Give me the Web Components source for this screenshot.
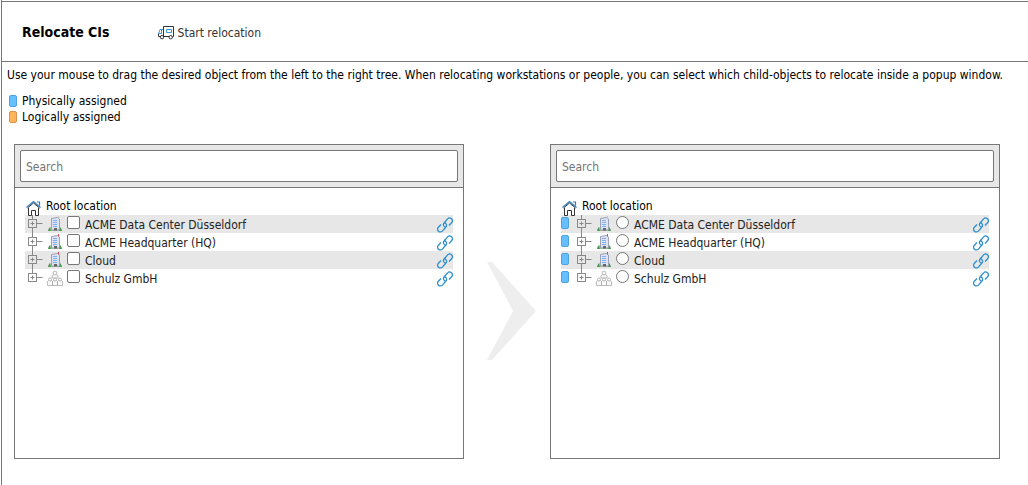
<!DOCTYPE html>
<html lang="en">
<head>
<meta charset="utf-8">
<title>Relocate CIs</title>
<style>
html, body { margin: 0; height: 100%; background: #fff; }
body { font: 12px/16px "DejaVu Sans Condensed", sans-serif; color: #000; }
</style>
</head>
<body>
<relocate-page></relocate-page>
<script>
const define = (name, html, setup) => {
  const template = document.createElement('template');
  template.innerHTML = `<style>*{box-sizing:border-box}:host{display:block;box-sizing:border-box}</style>${html}`;
  customElements.define(name, class extends HTMLElement {
    static observedAttributes = ['name'];
    constructor() {
      super();
      this.attachShadow({ mode: 'open' }).append(template.content.cloneNode(true));
    }
    connectedCallback() { if (setup) setup(this, this.shadowRoot); }
    attributeChangedCallback() { if (this.isConnected && setup) setup(this, this.shadowRoot); }
  });
};

const ICONS = {
  truck: `<svg width="17" height="14" viewBox="0 0 17 14" fill="none" stroke="#333"><path d="M5.500 10.500V.5h10v10h-1M11 10.500H6M2 10.500H.5V7.500"/><path d="M5 3.500H2L.5 7.500h3V4M8.500 3.500h5v3h-5z" stroke="#3a96d8"/><circle cx="4" cy="11.200" r="1.700" fill="#fff"/><circle cx="12.700" cy="11.200" r="1.700" fill="#fff"/></svg>`,
  home: `<svg width="16" height="16" viewBox="0 0 16 16" fill="none"><path d="M2.500 8v7.500h3v-5h4v5h3V8" stroke="#333"/><path d="M1.500 8L7.500 3l6 5" stroke="#333"/><path d="M.5 7.500L7.500 1.500l7 6M11 2h2.500v3.500" stroke="#2f7dbd" stroke-width="1.200"/></svg>`,
  building: `<svg width="16" height="16" viewBox="0 0 16 16"><path d="M1 15l1-3 2-1h8l2 1 1 3z" fill="#a8c49e"/><path d="M1 15l1.500-4L4 15zM12 15l1.500-4 1.500 4z" fill="#459a4c"/><path d="M4.500 2.500l6-1 2 1.500v11h-8z" fill="#dde3f5" stroke="#9299aa" stroke-width=".9"/><path d="M6 4.500h4M6 6.500h4M6 8.500h4M6 10.500h4" stroke="#7fb0ec"/><path d="M7 14.500v-2.500h3v2.500" fill="#666"/><path d="M11.500 3V0" stroke="#bbb" stroke-width=".8"/></svg>`,
  company: `<svg width="16" height="16" viewBox="0 0 16 16" fill="#fafafa" stroke="#aaa" stroke-width=".8"><path d="M5 8V5.500l2-1h2l2 1V8z"/><circle cx="8" cy="3" r="1.900"/><path d="M.5 15.500v-4l1-1h3l1 1v4zM5.500 15.500v-4l1-1h3l1 1v4zM10.500 15.500v-4l1-1h3l1 1v4z"/><circle cx="3" cy="9.500" r="1.500"/><circle cx="8" cy="9.500" r="1.500"/><circle cx="13" cy="9.500" r="1.500"/></svg>`,
  link: `<svg width="16" height="16" viewBox="0 0 16 16" fill="none" stroke="#2e8fd0" stroke-width="1.300"><path d="M9 10.500A2.800 2.800 0 0 1 7.300 5.700L10.600 1.900A2.700 2.700 0 0 1 14.600 5.700L12 8.500M7 5.500A2.800 2.800 0 0 1 8.700 10.300L5.400 14.100A2.700 2.700 0 0 1 1.400 10.300L4 7.500"/></svg>`
};
ICONS.tower = ICONS.building.replace('</svg>', '<path d="M11.500 2.500V0" stroke="#e04444"/></svg>');

define('ui-icon', `<style>:host{display:inline-block;flex:none;line-height:0}svg{display:block}</style><span></span>`,
  (el, root) => { root.querySelector('span').innerHTML = ICONS[el.getAttribute('name')] || ''; });

define('color-chip', `<style>:host{flex:none;width:8px;height:12px;border:1px solid #4fa3dc;border-radius:2px;background:#66bfff}:host([kind=logical]){background:#ffb35c;border-color:#d6934a}</style>`);

define('legend-item', `<style>:host{display:flex;align-items:center;gap:5px}</style><color-chip></color-chip><slot></slot>`,
  (el, root) => root.querySelector('color-chip').setAttribute('kind', el.getAttribute('kind')));

define('page-header', `<style>
header{display:flex;align-items:center;gap:48px;height:61px;padding-left:20px;border:solid #777;border-width:1px 0}
h1{margin:0;font-size:14px;line-height:20px}
button{display:flex;align-items:center;gap:3px;padding:2px 0 0;border:0;background:none;font:inherit;color:#333}
</style><header><h1><slot></slot></h1><button type="button"><ui-icon name="truck"></ui-icon>Start relocation</button></header>`);

define('tree-row', `<style>
:host{display:flex;align-items:center;height:18px}
:host([shaded]){background:#e6e7e6}
color-chip{margin:0 5px 2px 0}
.toggle{flex:none;padding:0;border:0;background:none;width:18px;height:18px;margin-right:4px}
.toggle svg{display:block}
input{appearance:none;flex:none;width:13px;height:13px;margin:0 5px 3px 4px;border:1px solid #767676;border-radius:2px;background:#fff}
input[type=radio]{border-radius:50%}
label{flex:1;padding-top:2px;color:#222}
a{display:block;padding-top:2px;line-height:0}
</style>
<button class="toggle" type="button" aria-label="Expand"><svg width="18" height="18" fill="none" stroke="#888"><path d="M7.500 0v4M11.500 8.500h6M5.500 8.500h4M7.500 6.500v4"/><path class="down" d="M7.500 13v5"/><rect x="3.500" y="4.500" width="8" height="8"/></svg></button>
<ui-icon></ui-icon><input id="pick" name="pick"><label for="pick"><slot></slot></label><a href="#" aria-label="Link"><ui-icon name="link"></ui-icon></a>`,
  (el, root) => {
    root.querySelector('ui-icon').setAttribute('name', el.getAttribute('icon'));
    root.querySelector('input').type = el.getAttribute('select');
    if (el.getAttribute('select') === 'radio') root.querySelector('button').before(document.createElement('color-chip'));
    if (el.hasAttribute('last')) root.querySelector('.down').remove();
  });

define('tree-panel', `<style>
:host{border:1px solid #777;min-height:315px}
.search{padding:5px;background:#e6e7e6;border-bottom:1px solid #777}
input{display:block;width:100%;height:32px;padding:2px 5px 0;border:1px solid #767676;border-radius:2px;font:inherit;background:#fff}
input::placeholder{color:#757575}
.tree{padding:9px 10px 0}
.root{display:flex;align-items:center;gap:4px;height:18px}
.root ui-icon{margin:4px 0 0 1px}
</style>
<div class="search"><input type="text" placeholder="Search" aria-label="Search"></div>
<div class="tree"><div class="root"><ui-icon name="home"></ui-icon>Root location</div><div class="rows"></div></div>`,
  (el, root) => {
    const mode = el.getAttribute('select');
    root.querySelector('.rows').innerHTML = [
      ['ACME Data Center Düsseldorf', 'building', 'shaded'],
      ['ACME Headquarter (HQ)', 'tower', ''],
      ['Cloud', 'tower', 'shaded'],
      ['Schulz GmbH', 'company', 'last']
    ].map(([text, icon, flags]) => `<tree-row select="${mode}" icon="${icon}" ${flags}>${text}</tree-row>`).join('');
  });

define('relocate-page', `<style>
:host{min-height:100%;margin-left:1px;border-left:1px solid #777;padding-top:1px}
p{margin:5px 5px 10px}
.legend{padding-left:7px}
.trees{display:grid;grid-template-columns:1fr 86px 1fr;padding:19px 28px 24px 12px}
.arrow{display:flex;align-items:center;padding-left:23px}
.arrow svg{display:block;margin-top:18px}
</style>
<page-header>Relocate CIs</page-header>
<p>Use your mouse to drag the desired object from the left to the right tree. When relocating workstations or people, you can select which child-objects to relocate inside a popup window.</p>
<div class="legend"><legend-item kind="physical">Physically assigned</legend-item><legend-item kind="logical">Logically assigned</legend-item></div>
<div class="trees"><tree-panel select="checkbox"></tree-panel><div class="arrow"><svg width="50" height="98" viewBox="0 0 50 98" fill="#eee"><path d="M0 0h5l44 49-44 49H0l26-49z"/></svg></div><tree-panel select="radio"></tree-panel></div>`);
</script>
</body>
</html>
